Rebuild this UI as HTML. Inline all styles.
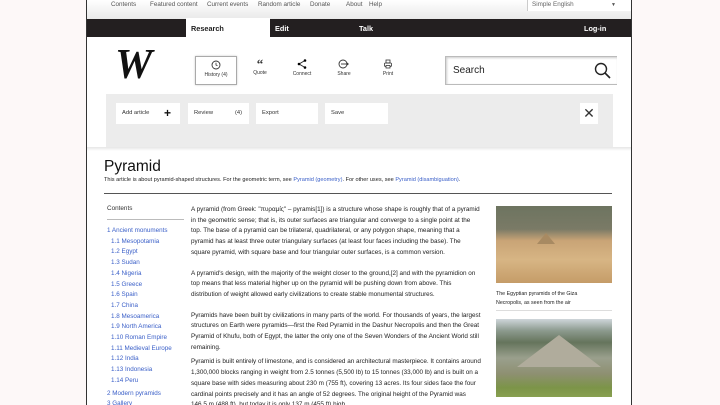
<!DOCTYPE html>
<html><head><meta charset="utf-8"><style>
*{margin:0;padding:0;box-sizing:border-box}
html,body{width:720px;height:405px;overflow:hidden}
body{background:#fdf8f8;font-family:"Liberation Sans",sans-serif;position:relative;color:#222}
.frame{position:absolute;left:86px;top:0;width:546px;height:405px;overflow:hidden;background:#fff;border-left:1px solid #333;border-right:1px solid #333}
.a{position:absolute}
.top{left:0;top:0;width:544px;height:19px;background:linear-gradient(#fff,#e9e9e9)}
.top span{position:absolute;top:1px;font-size:6.3px;color:#555}
.bar{left:0;top:19px;width:544px;height:18px;background:#231f20}
.bar b{position:absolute;top:5px;font-size:7.3px;color:#fff}
.tab{left:99px;top:18px;width:84px;height:20px;background:#fff}
.tb{position:absolute;top:56px;width:42px;height:29px;font-size:5px;color:#333;text-align:center}
.tb svg{display:block;margin:3px auto 2px}
.gray{left:19px;top:94px;width:507px;height:53px;background:#ececec}
.btn{position:absolute;top:103px;height:21px;background:#fff;font-size:5.8px;color:#333;line-height:21px;padding-left:6px}
p,.t{font-size:6.35px;line-height:10.7px;color:#222}
.toc div{font-size:6.3px;line-height:10.7px;color:#3a5fc8}
</style></head><body>
<div class="frame">
<div class="a top">
<span style="left:24px">Contents</span><span style="left:63px">Featured content</span><span style="left:120px">Current events</span><span style="left:171px">Random article</span><span style="left:223px">Donate</span><span style="left:259px">About</span><span style="left:282px">Help</span>
<div class="a" style="left:440px;top:0;width:104px;height:11px;background:#fff;border-left:1px solid #ccc"></div>
<span style="left:445px;color:#666">Simple English</span><span style="left:524px;top:2px;font-size:5px">▼</span>
</div>
<div class="a bar"><b style="left:188px">Edit</b><b style="left:272px">Talk</b><b style="left:497px">Log-in</b></div>
<div class="a tab"><b style="position:absolute;left:5px;top:6px;font-size:7.3px;color:#222">Research</b></div>
<div class="a" style="left:28px;top:44px;font-family:'Liberation Serif',serif;font-style:italic;font-weight:bold;font-size:42px;line-height:42px;color:#111">W</div>
<div class="tb" style="left:108px;border:1px solid #aaa;box-shadow:0 0 2px #ccc"><svg width="10" height="10" viewBox="0 0 10 10"><circle cx="5" cy="5" r="4" fill="none" stroke="#333" stroke-width="0.9"/><path d="M5 2.8V5L6.5 5.8" fill="none" stroke="#333" stroke-width="0.8"/></svg>History (4)</div>
<div class="tb" style="left:152px"><div style="font-size:13px;font-weight:bold;line-height:13px;margin-top:1px;font-family:'Liberation Serif',serif">“</div>Quote</div>
<div class="tb" style="left:194px"><svg width="10" height="10" viewBox="0 0 10 10"><path d="M8 1.5L2 5L8 8.5" fill="none" stroke="#222" stroke-width="0.9"/><circle cx="8" cy="1.5" r="1.3"/><circle cx="2" cy="5" r="1.3"/><circle cx="8" cy="8.5" r="1.3"/></svg>Connect</div>
<div class="tb" style="left:236px"><svg width="12" height="10" viewBox="0 0 12 10"><circle cx="5" cy="5" r="4" fill="none" stroke="#333" stroke-width="0.9"/><path d="M3 5H10" stroke="#333" stroke-width="0.9"/><path d="M9 3.5L11 5L9 6.5Z" fill="#333"/></svg>Share</div>
<div class="tb" style="left:280px"><svg width="10" height="10" viewBox="0 0 10 10"><rect x="3" y="1" width="4" height="3" fill="none" stroke="#333" stroke-width="0.8"/><rect x="1.5" y="4" width="7" height="3.5" rx="1" fill="none" stroke="#333" stroke-width="0.8"/><rect x="3" y="6.5" width="4" height="2.5" fill="#fff" stroke="#333" stroke-width="0.8"/></svg>Print</div>
<div class="a" style="left:358px;top:56px;width:172px;height:29px;border:1px solid #bbb;border-right:none;box-shadow:inset 1px 1px 2px #ccc"><span style="position:absolute;left:7px;top:8px;font-size:10px;color:#222">Search</span>
<svg style="position:absolute;left:148px;top:5px" width="17" height="17" viewBox="0 0 17 17"><circle cx="7" cy="7" r="5.5" fill="none" stroke="#222" stroke-width="1.4"/><path d="M11 11L16 16" stroke="#222" stroke-width="1.6"/></svg></div>
<div class="a gray"></div>
<div class="btn" style="left:29px;width:64px">Add article<b style="position:absolute;left:48px;top:0;font-size:12px;color:#111">+</b></div>
<div class="btn" style="left:101px;width:61px">Review<span style="position:absolute;left:47px">(4)</span></div>
<div class="btn" style="left:169px;width:62px">Export</div>
<div class="btn" style="left:238px;width:63px">Save</div>
<div class="a" style="left:493px;top:103px;width:18px;height:21px;background:#fff;font-size:14px;line-height:21px;text-align:center;color:#333">✕</div>
<div class="a" style="left:0;top:147px;width:544px;height:4px;background:linear-gradient(#e6e6e6,#fff)"></div>
<div class="a" style="left:17px;top:158px;font-size:15.5px;color:#111">Pyramid</div>
<div class="a t" style="left:17px;top:176px;font-size:5.6px;line-height:8px">This article is about pyramid-shaped structures. For the geometric term, see <span style="color:#3a5fc8">Pyramid (geometry)</span>. For other uses, see <span style="color:#3a5fc8">Pyramid (disambiguation)</span>.</div>
<div class="a" style="left:17px;top:193px;width:508px;height:1px;background:#555"></div>
<div class="a t" style="left:20px;top:204px;color:#333">Contents</div>
<div class="a" style="left:20px;top:219px;width:77px;height:1px;background:#bbb"></div>
<div class="a toc" style="left:20px;top:226px">
<div>1 Ancient monuments</div><div style="padding-left:4px">1.1 Mesopotamia</div><div style="padding-left:4px">1.2 Egypt</div><div style="padding-left:4px">1.3 Sudan</div><div style="padding-left:4px">1.4 Nigeria</div><div style="padding-left:4px">1.5 Greece</div><div style="padding-left:4px">1.6 Spain</div><div style="padding-left:4px">1.7 China</div><div style="padding-left:4px">1.8 Mesoamerica</div><div style="padding-left:4px">1.9 North America</div><div style="padding-left:4px">1.10 Roman Empire</div><div style="padding-left:4px">1.11 Medieval Europe</div><div style="padding-left:4px">1.12 India</div><div style="padding-left:4px">1.13 Indonesia</div><div style="padding-left:4px">1.14 Peru</div><div style="margin-top:2px">2 Modern pyramids</div><div>3 Gallery</div>
</div>
<div class="a" style="left:104px;top:205px;width:290px">
<p>A pyramid (from Greek: "πυραμίς" – pyramis[1]) is a structure whose shape is roughly that of a pyramid in the geometric sense; that is, its outer surfaces are triangular and converge to a single point at the top. The base of a pyramid can be trilateral, quadrilateral, or any polygon shape, meaning that a pyramid has at least three outer triangulary surfaces (at least four faces including the base). The square pyramid, with square base and four triangular outer surfaces, is a common version.</p>
<p style="margin-top:10px">A pyramid's design, with the majority of the weight closer to the ground,[2] and with the pyramidion on top means that less material higher up on the pyramid will be pushing down from above. This distribution of weight allowed early civilizations to create stable monumental structures.</p>
<p style="margin-top:10px">Pyramids have been built by civilizations in many parts of the world. For thousands of years, the largest structures on Earth were pyramids—first the Red Pyramid in the Dashur Necropolis and then the Great Pyramid of Khufu, both of Egypt, the latter the only one of the Seven Wonders of the Ancient World still remaining.</p>
<p style="margin-top:4px">Pyramid is built entirely of limestone, and is considered an architectural masterpiece. It contains around 1,300,000 blocks ranging in weight from 2.5 tonnes (5,500 lb) to 15 tonnes (33,000 lb) and is built on a square base with sides measuring about 230 m (755 ft), covering 13 acres. Its four sides face the four cardinal points precisely and it has an angle of 52 degrees. The original height of the Pyramid was 146.5 m (488 ft), but today it is only 137 m (455 ft) high.</p>
</div>
<div class="a" style="left:409px;top:206px;width:116px;height:77px;background:linear-gradient(#6d7460 0%,#7a7a66 30%,#c9a476 45%,#d7b584 70%,#c59c68 100%)"></div>
<div class="a" style="left:450px;top:233px;width:0;height:0;border-left:9px solid transparent;border-right:9px solid transparent;border-bottom:11px solid #a88a62"></div>
<div class="a t" style="left:409px;top:290px;font-size:5.3px;line-height:8.5px">The Egyptian pyramids of the Giza<br>Necropolis, as seen from the air</div>
<div class="a" style="left:409px;top:310px;width:116px;height:1px;background:#ddd"></div>
<div class="a" style="left:409px;top:319px;width:116px;height:78px;background:linear-gradient(#cfd6da 0%,#8c9a8e 15%,#65745c 30%,#9aa08d 50%,#8e9072 70%,#7c9448 88%,#88a050 100%)"></div>
<div class="a" style="left:430px;top:335px;width:0;height:0;border-left:42px solid transparent;border-right:42px solid transparent;border-bottom:32px solid #b0ac9c"></div>
</div>
</body></html>
